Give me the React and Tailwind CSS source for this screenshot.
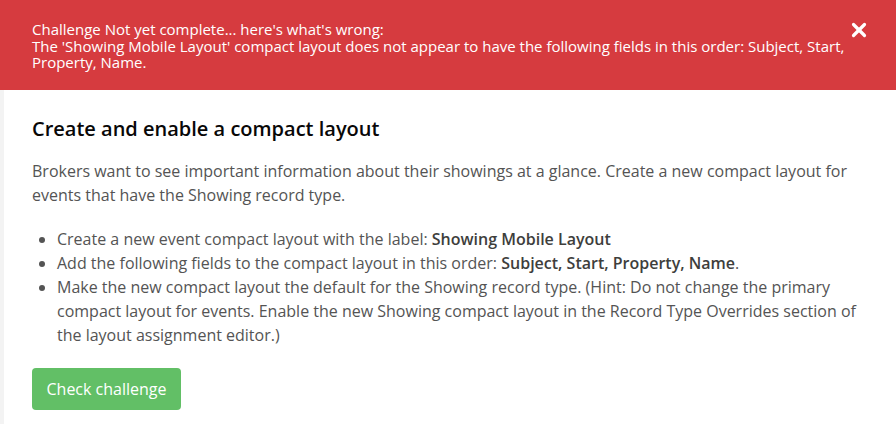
import { X } from 'lucide-react'

const BULLETS = [
  <>Create a new event compact layout with the label: <b className="font-semibold text-[#3e3e3c]">Showing Mobile Layout</b></>,
  <>Add the following fields to the compact layout in this order: <b className="font-semibold text-[#3e3e3c]">Subject, Start, Property, Name</b>.</>,
  <>Make the new compact layout the default for the Showing record type. (Hint: Do not change the primary compact layout for events. Enable the new Showing compact layout in the Record Type Overrides section of the layout assignment editor.)</>,
]

export default function App() {
  return (
    <div className="w-[896px] h-[424px] overflow-hidden bg-white flex flex-col" style={{ fontFamily: '"Open Sans", sans-serif' }}>
      {/* error banner */}
      <div className="h-[90px] shrink-0 bg-[#d63b3f] text-white flex items-start justify-between pl-8 pr-[26px] pt-[21px]">
        <p className="text-[15px] leading-[16.5px] w-[816px]">
          Challenge Not yet complete... here's what's wrong:<br />
          The 'Showing Mobile Layout' compact layout does not appear to have the following fields in this order: Subject, Start, Property, Name.
        </p>
        <X size={22} strokeWidth={3.5} className="-mt-[2px]" />
      </div>

      <div className="flex flex-1">
        <div className="w-[4px] bg-[#f3f3f3]" />
        <div className="flex-1 pl-7 pr-8 pt-[27px]">
          <h2 className="text-[20px] font-semibold text-[#080707] leading-6">Create and enable a compact layout</h2>
          <p className="mt-[18px] text-[16px] leading-6 text-[#545454]">
            Brokers want to see important information about their showings at a glance. Create a new compact layout for events that have the Showing record type.
          </p>
          <ul className="mt-[20px] list-disc pl-[25px] text-[16px] leading-6 text-[#545454]">
            {BULLETS.map((b, i) => (
              <li key={i}>{b}</li>
            ))}
          </ul>
          <button className="mt-[21px] w-[149px] h-[42px] rounded bg-[#62bf66] text-white text-[16px]">
            Check challenge
          </button>
        </div>
      </div>
    </div>
  )
}
